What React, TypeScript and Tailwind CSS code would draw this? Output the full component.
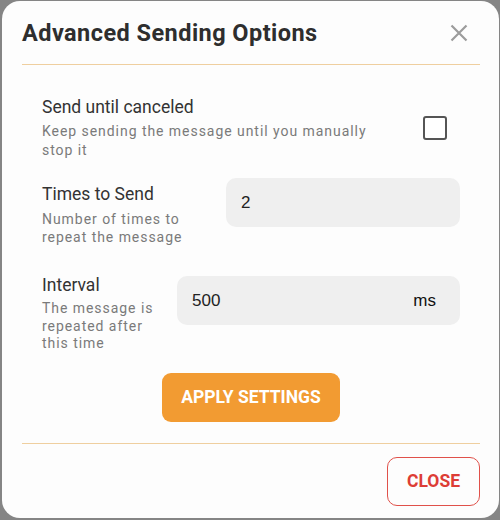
import React, { useState } from 'react';

const font = { fontFamily: 'Roboto, "Liberation Sans", sans-serif' };
const inputFont = { fontFamily: '"Liberation Sans", Arial, sans-serif' };

const App: React.FC = () => {
  const [untilCanceled, setUntilCanceled] = useState<boolean>(false);
  const [times, setTimes] = useState<string>('2');
  const [interval, setIntervalValue] = useState<string>('500');

  return (
    <div className="w-[500px] h-[520px] bg-[#858585] pt-[1px] pl-[2px] overflow-hidden" style={font}>
      <div className="w-[497px] h-[517px] bg-[#fdfdfd] rounded-[18px] flex flex-col pl-[20px] pr-[19px]">
        {/* header */}
        <div className="h-[64px] flex items-center justify-between border-b border-[#efcf9f] shrink-0">
          <h2 className="text-[23.5px] leading-[28px] font-bold tracking-[0.45px] text-[#2e2e2e]">
            Advanced Sending Options
          </h2>
          <button className="mr-[1px] w-10 h-10 flex items-center justify-center text-[#9c9c9c]">
            <svg width="18" height="18" viewBox="0 0 18 18" fill="none" stroke="currentColor" strokeWidth="2.2">
              <path d="M1.5 1.5 L16.5 16.5 M16.5 1.5 L1.5 16.5" />
            </svg>
          </button>
        </div>

        {/* body */}
        <div className="px-[20px] pt-[30px] pb-[21px] flex flex-col border-b border-[#efcf9f]">
          <div className="flex items-start justify-between">
            <div className="w-[345px]">
              <div className="text-[17.5px] leading-[24px] text-[#333]">Send until canceled</div>
              <div className="mt-[3px] text-[14px] leading-[19px] tracking-[0.95px] text-[#7a7a7a]">
                Keep sending the message until you manually stop it
              </div>
            </div>
            <button
              onClick={() => setUntilCanceled(!untilCanceled)}
              className="mt-[21px] mr-[13px] w-[24px] h-[24px] border-2 border-[#555] rounded-[3px] bg-white"
              aria-checked={untilCanceled}
            />
          </div>

          <div className="mt-[18px] flex items-start gap-6">
            <div className="flex-1 mt-[4px]">
              <div className="text-[17.5px] leading-[24px] text-[#333]">Times to Send</div>
              <div className="mt-[4px] text-[14px] leading-[18px] tracking-[0.95px] text-[#7a7a7a]">
                Number of times to repeat the message
              </div>
            </div>
            <input
              value={times}
              onChange={(e) => setTimes(e.target.value)}
              className="w-[234px] h-[49px] rounded-[10px] bg-[#efefef] px-[15px] text-[17px] text-[#222] outline-none"
              style={inputFont}
            />
          </div>

          <div className="mt-[27px] flex items-start gap-[20px]">
            <div className="flex-1">
              <div className="text-[17.5px] leading-[24px] text-[#333]">Interval</div>
              <div className="mt-[3px] text-[14px] leading-[17.5px] tracking-[0.95px] text-[#7a7a7a]">
                The message is repeated after this time
              </div>
            </div>
            <div className="mt-[3px] w-[283px] h-[49px] rounded-[10px] bg-[#efefef] flex items-center pl-[15px] pr-[24px]">
              <input
                value={interval}
                onChange={(e) => setIntervalValue(e.target.value)}
                className="flex-1 min-w-0 bg-transparent text-[17px] text-[#222] outline-none"
                style={inputFont}
              />
              <span className="text-[17px] font-medium text-[#111]" style={inputFont}>
                ms
              </span>
            </div>
          </div>

          <div className="mt-[20px] flex justify-center">
            <button className="w-[178px] h-[49px] rounded-[9px] bg-[#f29b32] text-white text-[17.5px] font-bold uppercase">
              Apply Settings
            </button>
          </div>
        </div>

        {/* footer */}
        <div className="flex justify-end pt-[13px]">
          <button className="w-[93px] h-[49px] rounded-[10px] border border-[#e0514a] text-[#dd3d36] text-[17.5px] font-bold uppercase">
            Close
          </button>
        </div>
      </div>
    </div>
  );
};

export default App;
